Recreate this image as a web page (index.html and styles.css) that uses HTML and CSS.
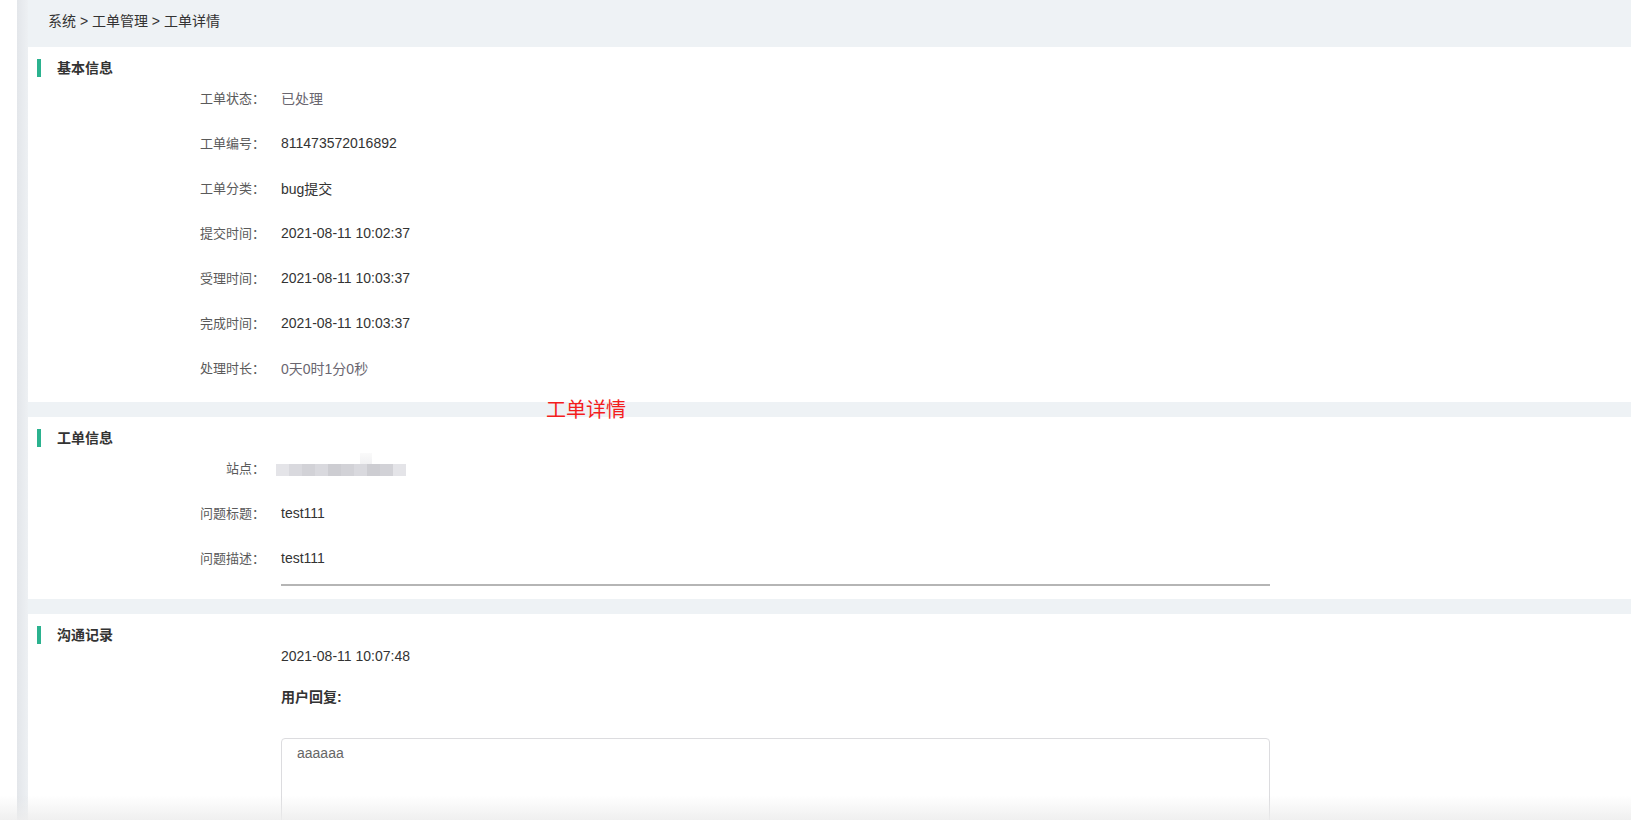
FILE: index.html
```html
<!DOCTYPE html>
<html lang="zh-CN">
<head>
<meta charset="utf-8">
<title>工单详情</title>
<link rel="stylesheet" href="styles.css">
</head>
<body>
<div class="app">
  <div class="gutter"></div>
  <div class="shade"></div>
  <main class="main">
    <div class="crumbs">系统 &gt; 工单管理 &gt; 工单详情</div>

    <section class="card card-basic">
      <h2 class="title">基本信息</h2>
      <div class="rows">
        <div class="row"><span class="label">工单状态：</span><span class="value muted">已处理</span></div>
        <div class="row"><span class="label">工单编号：</span><span class="value">811473572016892</span></div>
        <div class="row"><span class="label">工单分类：</span><span class="value">bug提交</span></div>
        <div class="row"><span class="label">提交时间：</span><span class="value">2021-08-11 10:02:37</span></div>
        <div class="row"><span class="label">受理时间：</span><span class="value">2021-08-11 10:03:37</span></div>
        <div class="row"><span class="label">完成时间：</span><span class="value">2021-08-11 10:03:37</span></div>
        <div class="row"><span class="label">处理时长：</span><span class="value muted">0天0时1分0秒</span></div>
      </div>
    </section>

    <section class="card card-order">
      <h2 class="title">工单信息</h2>
      <div class="rows">
        <div class="row"><span class="label">站点：</span>
          <span class="value blur">
            <i class="px p1"></i><i class="px p2"></i><i class="px p3"></i><i class="px p2"></i><i class="px p4"></i><i class="px p3"></i><i class="px p2"></i><i class="px p4"></i><i class="px p3"></i><i class="px p1"></i>
            <i class="spike"></i>
          </span>
        </div>
        <div class="row"><span class="label">问题标题：</span><span class="value">test111</span></div>
        <div class="row"><span class="label">问题描述：</span><span class="value">test111</span></div>
      </div>
      <div class="underline"></div>
    </section>

    <section class="card card-talk">
      <h2 class="title">沟通记录</h2>
      <div class="talk">
        <div class="talk-date">2021-08-11 10:07:48</div>
        <div class="talk-who">用户回复:</div>
        <div class="talk-box">aaaaaa</div>
      </div>
    </section>

    <div class="annot">工单详情</div>
  </main>
</div>
<div class="fade"></div>
</body>
</html>
```

FILE: styles.css
```css
* { box-sizing: border-box; }
html, body { margin: 0; padding: 0; }
body {
  width: 1631px;
  height: 820px;
  overflow: hidden;
  background: #fff;
  font-family: "Liberation Sans", "Noto Sans CJK SC", sans-serif;
  color: #333;
}
.app {
  display: flex;
  height: 820px;
}
.gutter { width: 17px; flex: none; background: #fff; }
.shade {
  width: 11px;
  flex: none;
  background: linear-gradient(to right, #e3e6ea, #edf0f3);
}
.main {
  position: relative;
  flex: 1;
  background: #eef2f5;
  display: flex;
  flex-direction: column;
  gap: 15px;
  overflow: hidden;
}
.main > * { flex: none; }
.crumbs {
  height: 47px;
  line-height: 42px;
  padding-left: 20px;
  font-size: 14px;
  color: #333;
  margin-bottom: -15px;
}
.card {
  background: #fff;
  padding: 12px 0 0;
}
.card-basic { height: 355px; }
.card-order { height: 182px; }
.main > .card-talk { flex: 1 0 auto; }
.title {
  margin: 0;
  height: 18px;
  line-height: 18px;
  font-size: 14px;
  font-weight: bold;
  color: #333;
  padding-left: 29px;
  position: relative;
}
.title::before {
  content: "";
  position: absolute;
  left: 9px;
  top: 0;
  width: 4px;
  height: 18px;
  background: #2bb28f;
}
.rows {
  margin-top: -2px;
}
.row {
  display: flex;
  align-items: center;
  height: 45px;
}
.label {
  width: 237px;
  text-align: right;
  font-size: 13px;
  color: #5a5a5a;
  flex: none;
}
.value {
  margin-left: 16px;
  font-size: 14px;
  color: #333;
}
.value.muted { color: #6a6670; }
.blur {
  position: relative;
  display: flex;
  height: 12px;
  margin-left: 11px;
  margin-top: 4px;
}
.px { display: block; width: 13px; height: 12px; }
.p1 { background: #e4e4e8; }
.p2 { background: #d9d9de; }
.p3 { background: #d2d2d7; }
.p4 { background: #cdcdd2; }
.spike {
  position: absolute;
  left: 84px;
  top: -11px;
  width: 12px;
  height: 11px;
  background: linear-gradient(to bottom, #fafafa, #f1f1f3);
}
.underline {
  margin-left: 253px;
  width: 989px;
  height: 2px;
  background: #b5b5b5;
  margin-top: 4px;
}
.talk {
  padding-left: 253px;
}
.talk-date {
  height: 22px;
  line-height: 22px;
  font-size: 14px;
  color: #333;
  margin-top: 1px;
}
.talk-who {
  margin-top: 19px;
  height: 22px;
  line-height: 22px;
  font-size: 14px;
  font-weight: bold;
  color: #333;
}
.talk-box {
  margin-top: 30px;
  width: 989px;
  height: 140px;
  border: 1px solid #dcdcdf;
  border-radius: 4px;
  padding: 4px 15px;
  line-height: 20px;
  font-size: 14px;
  color: #666;
}
.annot {
  position: absolute;
  left: 518px;
  top: 397px;
  font-size: 20px;
  line-height: 26px;
  color: #f41d1d;
}
.fade {
  position: fixed;
  left: 0;
  right: 0;
  bottom: 0;
  height: 24px;
  background: linear-gradient(to bottom, rgba(240,240,240,0), rgba(236,236,236,0.85));
  pointer-events: none;
}
```
